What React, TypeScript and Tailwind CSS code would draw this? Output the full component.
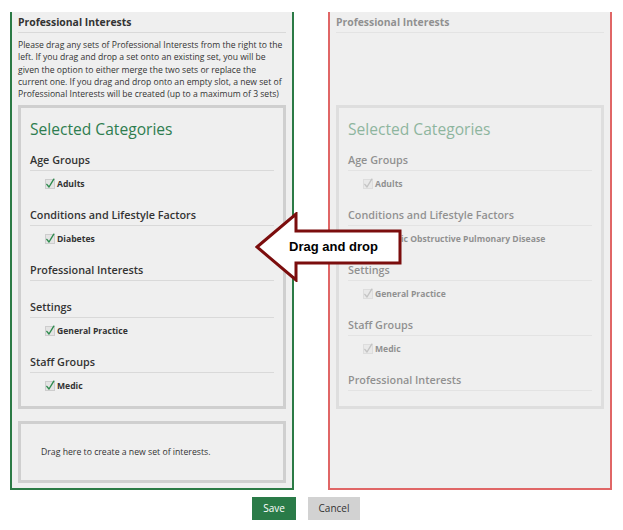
import React from "react";

type Group = { title: string; items: string[] };

const leftGroups: Group[] = [
  { title: "Age Groups", items: ["Adults"] },
  { title: "Conditions and Lifestyle Factors", items: ["Diabetes"] },
  { title: "Professional Interests", items: [] },
  { title: "Settings", items: ["General Practice"] },
  { title: "Staff Groups", items: ["Medic"] },
];

const rightGroups: Group[] = [
  { title: "Age Groups", items: ["Adults"] },
  { title: "Conditions and Lifestyle Factors", items: ["Chronic Obstructive Pulmonary Disease"] },
  { title: "Settings", items: ["General Practice"] },
  { title: "Staff Groups", items: ["Medic"] },
  { title: "Professional Interests", items: [] },
];

const Check = ({ muted }: { muted?: boolean }) => (
  <span className="inline-flex h-[10px] w-[10px] items-center justify-center border border-[#cdcdcd] bg-[#e4e4e4]">
    <svg viewBox="0 0 10 10" className="h-[10px] w-[10px] overflow-visible">
      <path
        d="M1.8 5.4 L4 8 L8.8 0.2"
        fill="none"
        stroke={muted ? "#9a9a9a" : "#2e8b4e"}
        strokeWidth="1.4"
        strokeLinecap="round"
        strokeLinejoin="round"
      />
    </svg>
  </span>
);

// one category block with its rule and ticked items
const CategoryGroup = ({ group, muted }: { group: Group; muted?: boolean }) => (
  <div className={group.items.length > 0 ? "mb-[15px] last:mb-[13px]" : "mb-[17px] last:mb-[15px]"}>
    <h4 className="border-b border-[#d9d9d9] pb-[1px] text-[10.8px] font-semibold leading-[18px] text-[#333]">
      {group.title}
    </h4>
    {group.items.length > 0 && (
      <ul className="mt-[6px]">
        {group.items.map((item) => (
          <li key={item} className="flex h-[14px] items-center gap-[2px] pl-[15px] text-[8.6px] font-bold text-[#333]">
            <Check muted={muted} />
            <span>{item}</span>
          </li>
        ))}
      </ul>
    )}
  </div>
);

const Panel = ({ groups, side }: { groups: Group[]; side: "left" | "right" }) => {
  const muted = side === "right";
  return (
    <div
      className={`flex w-[284px] flex-col border-x-2 border-b-2 bg-[#efefef] px-[6px] pt-[1px] pb-[5px] ${
        muted ? "border-[#e06666]" : "border-[#2b7a45]"
      }`}
    >
      <div className={muted ? "opacity-50" : ""}>
        <h3 className="border-b border-[#d9d9d9] pb-[1px] text-[10.4px] font-bold leading-[18px] text-[#333]">
          Professional Interests
        </h3>
        <p className={`mt-[6px] mb-[5px] text-[8.6px] leading-[12.3px] text-[#333] ${muted ? "invisible" : ""}`}>
          Please drag any sets of Professional Interests from the right to the left. If you drag and drop a set onto
          an existing set, you will be given the option to either merge the two sets or replace the current one. If
          you drag and drop onto an empty slot, a new set of Professional Interests will be created (up to a maximum
          of 3 sets)
        </p>
        <div className="border-[3px] border-[#cfcfcf] px-[9px] pt-[9px]">
          <h2 className="mb-[10px] text-[15.6px] leading-[24px] text-[#2e7d4f]">Selected Categories</h2>
          {groups.map((g) => (
            <CategoryGroup key={g.title} group={g} muted={muted} />
          ))}
        </div>
        {!muted && (
          <div className="mt-[12px] flex h-[62px] items-center border-[3px] border-[#cfcfcf] pl-[20px] text-[8.7px] text-[#333]">
            Drag here to create a new set of interests.
          </div>
        )}
      </div>
    </div>
  );
};

export default function App() {
  return (
    <div className="relative h-[530px] w-[623px] bg-white font-['Open_Sans',sans-serif]">
      <div className="flex gap-[34px] pt-[12px] pl-[10px]">
        <Panel groups={leftGroups} side="left" />
        <Panel groups={rightGroups} side="right" />
      </div>

      <div className="mt-[7px] flex justify-center gap-[12px] pr-[11px]">
        <button className="h-[23px] w-[44px] bg-[#2a7b48] text-[10px] text-white">Save</button>
        <button className="h-[23px] w-[52px] bg-[#d2d2d2] text-[10px] text-[#333]">Cancel</button>
      </div>

      {/* callout arrow over the gap between panels */}
      <svg className="absolute left-[255px] top-[212px]" width="148" height="70" viewBox="0 0 148 70">
        <polygon
          points="2,35 41,2 41,19 145,19 145,51 41,51 41,68"
          fill="white"
          stroke="#7b0d0d"
          strokeWidth="3"
          strokeLinejoin="miter"
        />
      </svg>
      <span className="absolute left-[289px] top-[238px] font-['Liberation_Sans',Arial,sans-serif] text-[13px] font-bold leading-[18px] text-black">
        Drag and drop
      </span>
    </div>
  );
}
